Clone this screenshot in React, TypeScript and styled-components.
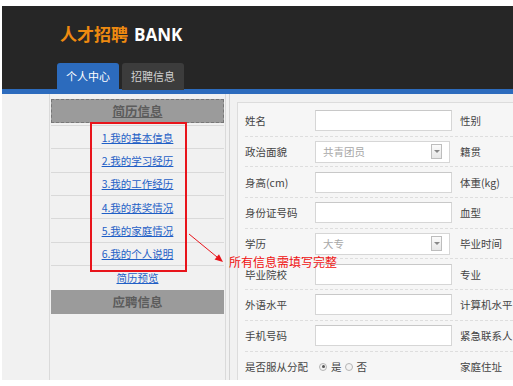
import React from 'react'
import styled, { createGlobalStyle } from 'styled-components'

const GlobalStyle = createGlobalStyle`
  body {
    margin: 0;
    background: #fff;
    font-family: "Noto Sans CJK SC", "Noto Sans", sans-serif;
  }
`

const Page = styled.div`
  position: relative;
  margin: 6px 0 0 2px;
  width: 511px;
  height: 374px;
  overflow: hidden;
`

const Header = styled.div`
  height: 83px;
  background: #262626;
  padding-top: 18px;
  box-sizing: border-box;
`

const Brand = styled.div`
  padding-left: 58px;
  font-size: 17px;
  line-height: 20px;
  font-weight: bold;
  color: #fff;
  font-family: "Open Sans", "Noto Sans CJK SC", sans-serif;
  white-space: nowrap;
`

const BrandCn = styled.span`
  color: #ee8a10;
  font-family: "Noto Sans CJK SC", sans-serif;
  margin-right: 6px;
`

const Tabs = styled.div`
  display: flex;
  gap: 3px;
  margin: 18px 0 0 55px;
`

const Tab = styled.div<{ $active?: boolean }>`
  width: 62px;
  height: 27px;
  line-height: 27px;
  text-align: center;
  font-size: 11px;
  border-radius: 3px 3px 0 0;
  background: ${({ $active }) => ($active ? '#2c6bbd' : '#3c3c3c')};
  color: ${({ $active }) => ($active ? '#fff' : '#d0d0d0')};
`

const BlueBar = styled.div`
  height: 5px;
  background: #2c6bbd;
`

const Body = styled.div`
  display: flex;
  height: 286px;
  background: #f1f1f1;
`

const Sidebar = styled.div`
  margin-left: 47px;
  width: 173px;
  padding: 5px 1px 0;
  border-left: 1px solid #dadada;
  border-right: 1px solid #dadada;
  flex-shrink: 0;
`

const SideHeader = styled.div<{ $dashed?: boolean }>`
  height: 24px;
  box-sizing: border-box;
  background: #9b9b9b;
  border: ${({ $dashed }) => ($dashed ? '1px dashed #777' : '1px solid #9b9b9b')};
  text-align: center;
  line-height: 22px;
  font-size: 12.5px;
  font-weight: 600;
  color: #5c5c5c;
  text-decoration: ${({ $dashed }) => ($dashed ? 'underline' : 'none')};
`

const MenuList = styled.div`
  margin-top: 2px;
  border-bottom: 1px solid #d9d9d9;
`

const MenuItem = styled.div`
  height: 23.33px;
  box-sizing: border-box;
  border-top: 1px solid #d9d9d9;
  display: flex;
  align-items: center;
  justify-content: center;
`

const Preview = styled.div`
  height: 24px;
  display: flex;
  align-items: center;
  justify-content: center;
`

const MenuLink = styled.a`
  font-size: 10.5px;
  color: #1f5fc6;
  text-decoration: underline;
  cursor: pointer;
`

const Gutter = styled.div`
  margin-left: 3px;
  width: 7px;
  border-left: 1px solid #d4d4d4;
  flex-shrink: 0;
`

const Panel = styled.div`
  margin-top: 8px;
  flex: 1;
  background: #f6f6f6;
  border-top: 1px solid #dcdcdc;
  border-left: 1px solid #dcdcdc;
  padding: 3px 0 0 7px;
  min-width: 0;
`

const Row = styled.div<{ $last?: boolean }>`
  height: 30.7px;
  box-sizing: border-box;
  display: flex;
  align-items: center;
  border-bottom: ${({ $last }) => ($last ? 'none' : '1px dashed #dedede')};
  white-space: nowrap;
`

const Label = styled.div`
  width: 70px;
  font-size: 10.5px;
  color: #444;
  flex-shrink: 0;
`

const TextInput = styled.div`
  width: 137px;
  height: 21px;
  box-sizing: border-box;
  background: #fff;
  border: 1px solid #d6d6d6;
  border-top-color: #c8c8c8;
  margin-right: 8px;
  flex-shrink: 0;
`

const Select = styled.div`
  width: 135px;
  height: 22px;
  box-sizing: border-box;
  background: #fff;
  border: 1px solid #d6d6d6;
  margin-right: 10px;
  padding: 0 7px 0 7px;
  display: flex;
  align-items: center;
  justify-content: space-between;
  font-size: 10.5px;
  color: #a8a8a8;
  flex-shrink: 0;
`

const SelectButton = styled.div`
  width: 11px;
  height: 15px;
  box-sizing: border-box;
  border: 1px solid #bdbdbd;
  background: linear-gradient(#fbfbfb, #e6e6e6);
  display: flex;
  align-items: center;
  justify-content: center;

  &::after {
    content: '';
    border-left: 3px solid transparent;
    border-right: 3px solid transparent;
    border-top: 3px solid #888;
  }
`

const RightLabel = styled.div`
  font-size: 10.5px;
  color: #444;
`

const RadioGroup = styled.div`
  display: flex;
  align-items: center;
  width: 145px;
  padding-left: 4px;
  box-sizing: border-box;
  font-size: 10.5px;
  color: #444;
  flex-shrink: 0;
`

const Radio = styled.span<{ $checked?: boolean }>`
  width: 8px;
  height: 8px;
  box-sizing: border-box;
  border-radius: 50%;
  border: 1px solid #b5b5b5;
  background: #f3f3f3;
  margin-right: 4px;
  display: flex;
  align-items: center;
  justify-content: center;

  &::after {
    content: '';
    width: 3px;
    height: 3px;
    border-radius: 50%;
    background: ${({ $checked }) => ($checked ? '#555' : 'transparent')};
  }
`

const RadioText = styled.span`
  margin-right: 3px;
`

const RedBox = styled.div`
  position: absolute;
  left: 88px;
  top: 116px;
  width: 97px;
  height: 150px;
  box-sizing: border-box;
  border: 2px solid #e8141b;
`

const Arrow = styled.svg`
  position: absolute;
  left: 185px;
  top: 225px;
`

const Note = styled.div`
  position: absolute;
  left: 227px;
  top: 248px;
  font-size: 12px;
  line-height: 16px;
  color: #f01010;
  white-space: nowrap;
`

const menu = ['1.我的基本信息', '2.我的学习经历', '3.我的工作经历', '4.我的获奖情况', '5.我的家庭情况', '6.我的个人说明']

type FieldRow = { label: string; right: string; select?: string }

const rows: FieldRow[] = [
  { label: '姓名', right: '性别' },
  { label: '政治面貌', right: '籍贯', select: '共青团员' },
  { label: '身高(cm)', right: '体重(kg)' },
  { label: '身份证号码', right: '血型' },
  { label: '学历', right: '毕业时间', select: '大专' },
  { label: '毕业院校', right: '专业' },
  { label: '外语水平', right: '计算机水平' },
  { label: '手机号码', right: '紧急联系人' },
]

const App = () => {
  return (
    <>
      <GlobalStyle />
      <Page>
        <Header>
          <Brand>
            <BrandCn>人才招聘</BrandCn>BANK
          </Brand>
          <Tabs>
            <Tab $active>个人中心</Tab>
            <Tab>招聘信息</Tab>
          </Tabs>
        </Header>
        <BlueBar />
        <Body>
          <Sidebar>
            <SideHeader $dashed>简历信息</SideHeader>
            <MenuList>
              {menu.map((m) => (
                <MenuItem key={m}>
                  <MenuLink>{m}</MenuLink>
                </MenuItem>
              ))}
            </MenuList>
            <Preview>
              <MenuLink>简历预览</MenuLink>
            </Preview>
            <SideHeader>应聘信息</SideHeader>
          </Sidebar>
          <Gutter />
          <Panel>
            {rows.map((r) => (
              <Row key={r.label}>
                <Label>{r.label}</Label>
                {r.select ? (
                  <Select>
                    {r.select}
                    <SelectButton />
                  </Select>
                ) : (
                  <TextInput />
                )}
                <RightLabel>{r.right}</RightLabel>
              </Row>
            ))}
            <Row $last>
              <Label>是否服从分配</Label>
              <RadioGroup>
                <Radio $checked />
                <RadioText>是</RadioText>
                <Radio />
                <RadioText>否</RadioText>
              </RadioGroup>
              <RightLabel>家庭住址</RightLabel>
            </Row>
          </Panel>
        </Body>
        <RedBox />
        <Arrow width="40" height="36" viewBox="0 0 40 36">
          <line x1="2" y1="3" x2="30" y2="26" stroke="#e8141b" strokeWidth="1" />
          <polygon points="36,31 27.6,28.6 32,23.2" fill="#e8141b" />
        </Arrow>
        <Note>所有信息需填写完整</Note>
      </Page>
    </>
  )
}

export default App
